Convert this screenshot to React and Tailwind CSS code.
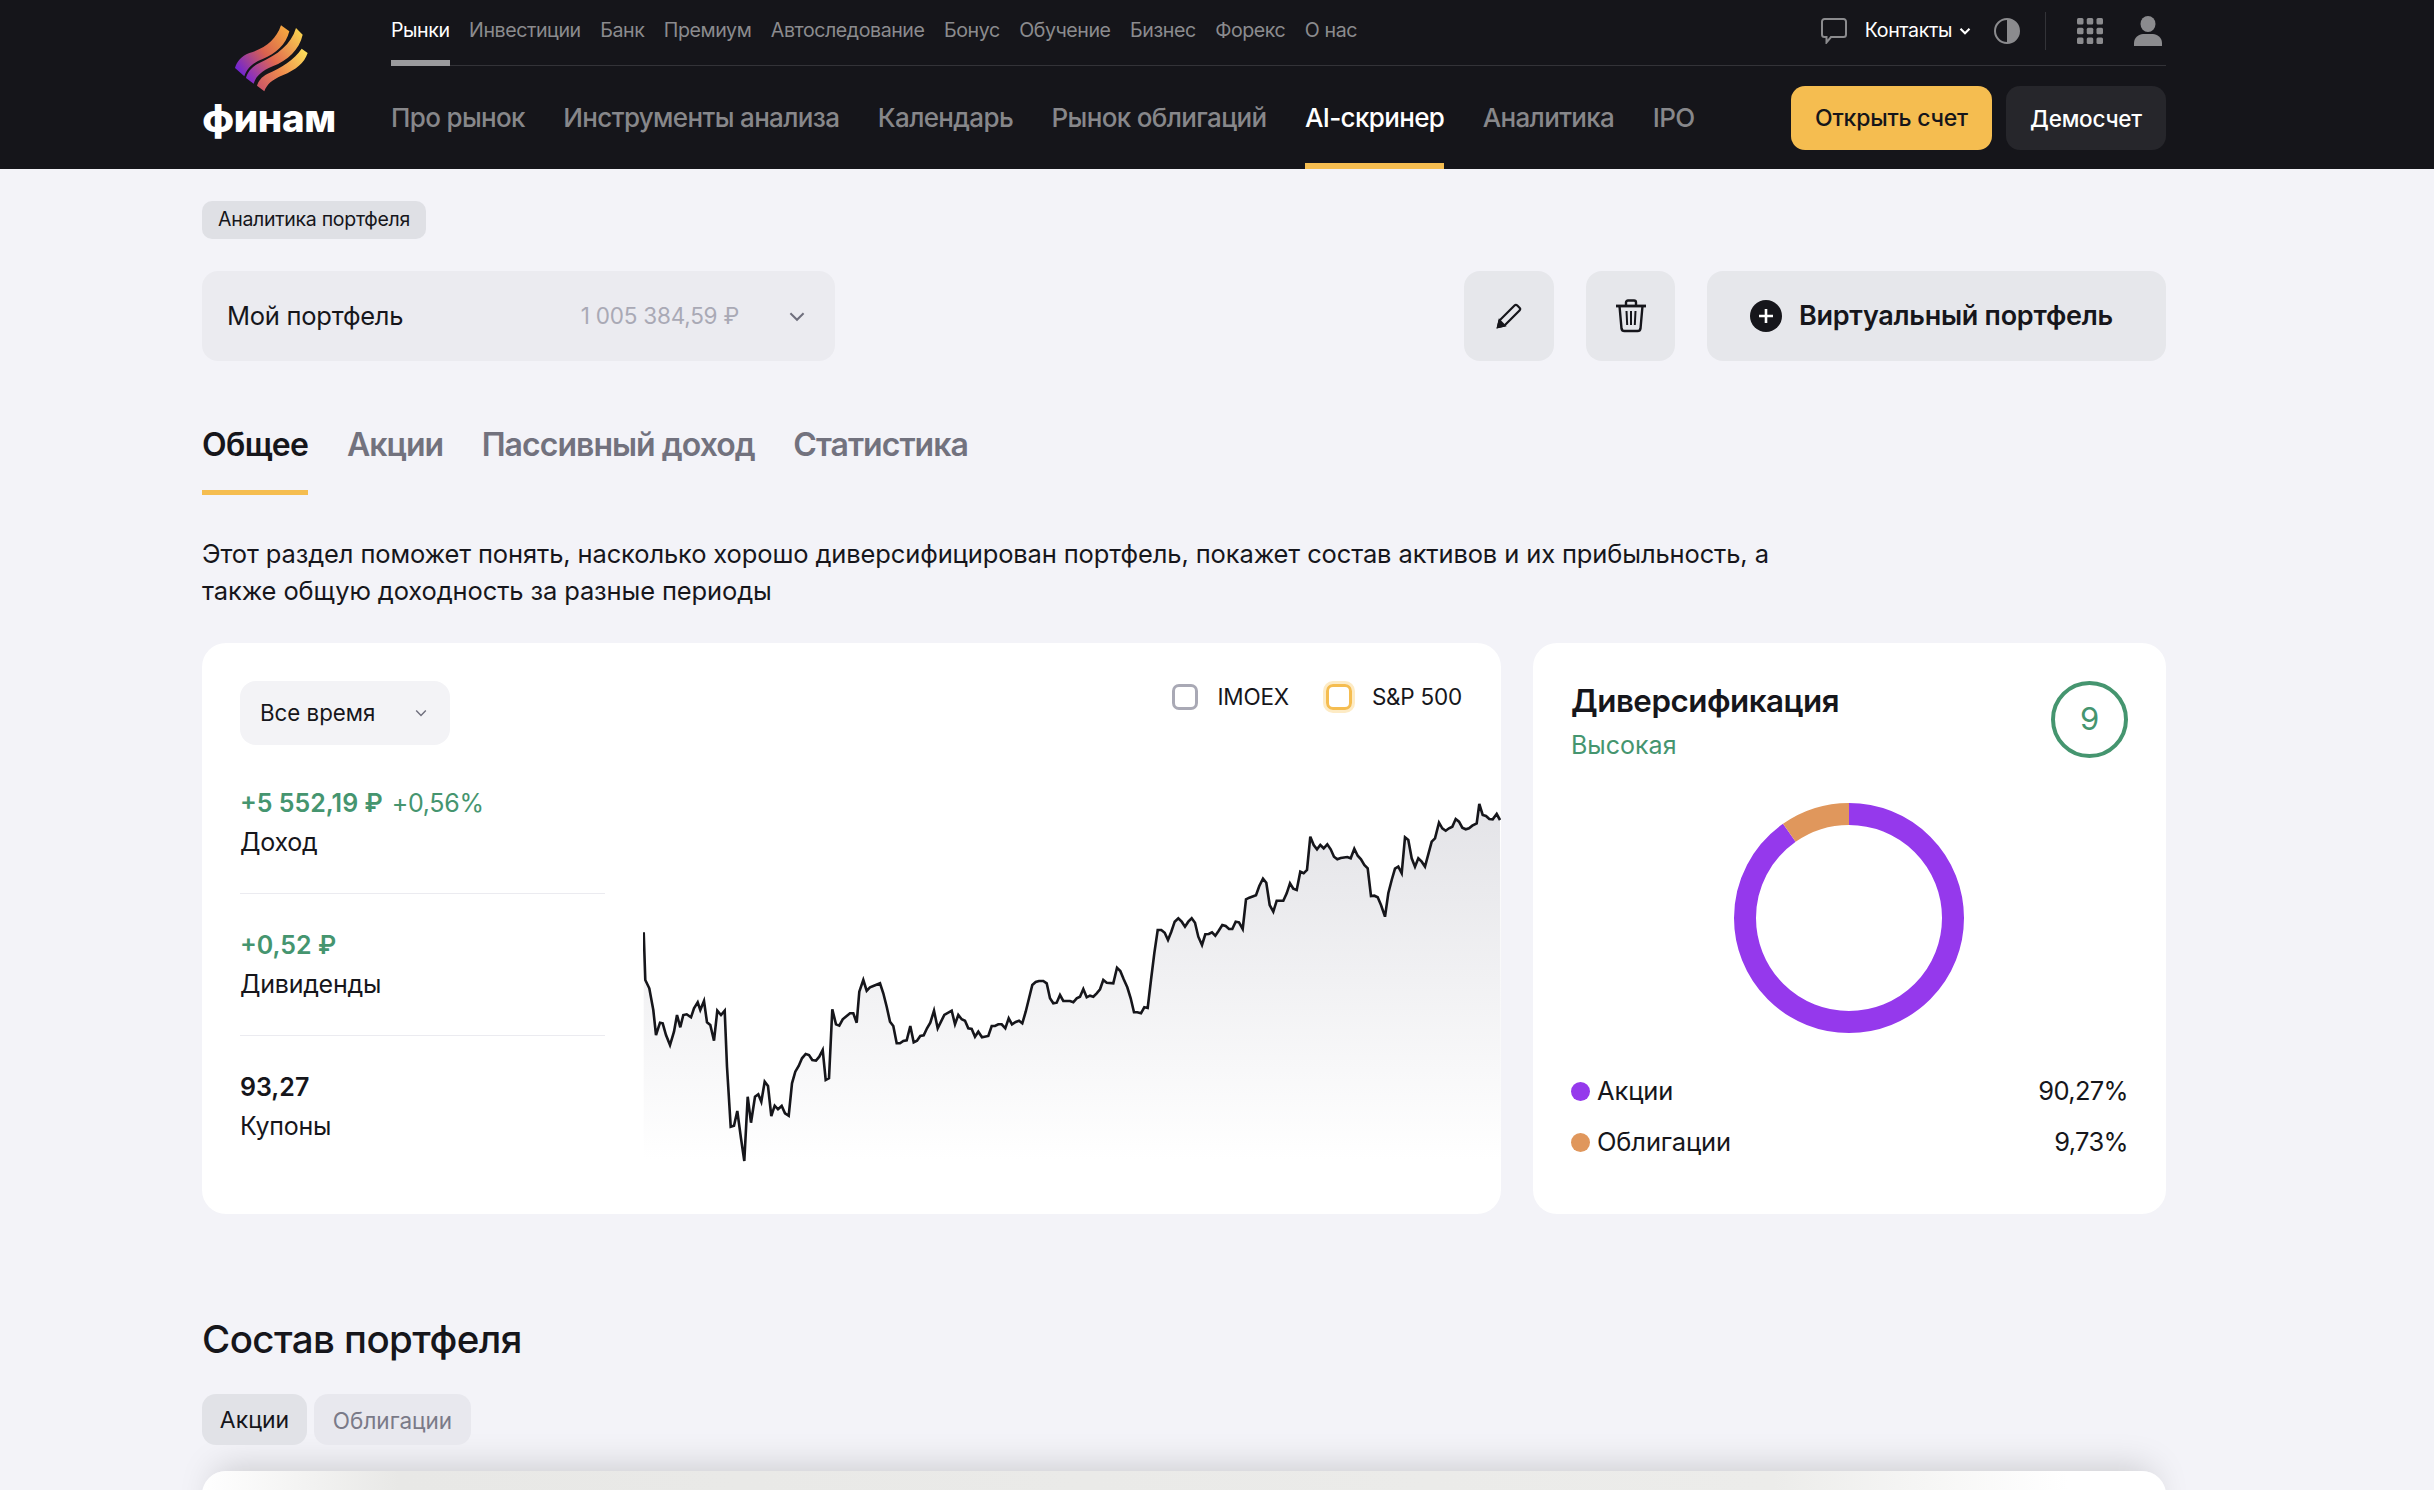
const topNav = ['Инвестиции', 'Банк', 'Премиум', 'Автоследование', 'Бонус', 'Обучение', 'Бизнес', 'Форекс', 'О нас']
const mainNav = ['Про рынок', 'Инструменты анализа', 'Календарь', 'Рынок облигаций', 'AI-скринер', 'Аналитика', 'IPO']

// chart trace, two halves in screen-ish units (3 per px)
const traceA = [[41,457],[46,600],[58,625],[70,690],[78,765],[90,728],[98,730],[108,765],[120,795],[132,755],[141,705],[151,742],[160,705],[170,703],[183,712],[192,685],[203,667],[211,690],[222,663],[231,727],[241,735],[252,782],[262,692],[273,705],[284,692],[291,860],[302,1040],[312,1037],[322,993],[333,1075],[343,1143],[353,950],[363,1028],[375,950],[385,943],[394,965],[404,905],[414,918],[424,1008],[434,977],[444,988],[455,978],[465,1000],[476,1007],[486,910],[496,875],[506,858],[516,835],[527,822],[537,825],[547,840],[558,842],[568,830],[578,810],[587,900],[597,895],[607,688],[618,733],[628,737],[638,718],[650,708],[660,700],[670,700],[680,728],[688,635],[700,600],[710,632],[720,622],[730,618],[750,610],[760,640],[770,680],[780,725],[790,738],[800,790],[810,790],[820,783],[830,781],[841,738],[851,787],[861,782],[871,768],[881,766],[891,745],[901,728],[912,692],[923,745],[933,725],[943,705],[965,692],[975,733],[985,705],[995,718],[1005,722],[1015,745],[1025,747],[1035,770],[1045,755],[1056,772],[1075,768],[1085,738],[1095,738],[1105,733],[1115,733],[1126,745],[1136,715],[1146,733],[1157,726],[1167,722],[1177,730],[1187,695],[1207,615],[1217,606],[1227,603],[1240,603],[1250,610],[1260,655],[1270,670],[1280,668],[1290,645],[1300,663],[1320,663],[1330,667],[1340,655],[1350,650],[1360,627],[1370,652],[1380,647],[1390,650],[1400,640]]
const traceB = [[0,628],[10,600],[20,608],[40,610],[51,563],[61,573],[71,598],[82,622],[92,655],[102,697],[112,697],[123,700],[133,682],[143,684],[153,600],[163,520],[173,450],[184,450],[194,458],[204,480],[214,455],[224,425],[235,415],[245,425],[255,440],[265,425],[275,415],[285,428],[295,470],[306,495],[316,463],[326,462],[336,457],[346,467],[356,452],[367,435],[377,438],[387,447],[397,447],[407,425],[417,427],[428,447],[438,358],[448,353],[468,346],[478,318],[489,296],[499,308],[509,375],[520,395],[530,362],[550,362],[560,340],[570,310],[580,326],[590,330],[601,275],[611,280],[621,270],[631,170],[641,195],[651,208],[661,195],[671,205],[682,193],[692,208],[702,230],[712,238],[722,234],[742,231],[752,235],[763,206],[773,227],[783,238],[793,255],[803,265],[813,348],[823,347],[833,352],[843,375],[855,410],[865,340],[875,300],[885,266],[895,260],[905,280],[915,172],[925,180],[935,235],[945,260],[955,235],[965,245],[975,260],[995,185],[1005,175],[1017,128],[1027,145],[1037,152],[1047,145],[1057,140],[1067,117],[1077,125],[1087,143],[1097,148],[1107,145],[1117,137],[1130,130],[1138,72],[1148,105],[1158,108],[1168,117],[1178,118],[1190,102],[1200,120]]

const points = [
    ...traceA.map(([x, y]) => [(x / 3 - 13).toFixed(1), (y / 3 - 20).toFixed(1)]),
    ...traceB.map(([x, y]) => [(x / 3 + 457).toFixed(1), (y / 3 - 20).toFixed(1)]),
]
const line = 'M' + points.map((p) => p.join(' ')).join('L')
const area = line + `L858 370L${points[0][0]} 370Z`

function Chevron({className, weight = 1.8}) {
    return (
        <svg viewBox="0 0 16 10" fill="none" stroke="currentColor" strokeWidth={weight} className={className}>
            <path d="M2 2l6 6 6-6" />
        </svg>
    )
}

function Logo() {
    return (
        <div className="flex flex-col items-center">
            <svg viewBox="150 40 240 210" className="mt-[23px] ml-[3px] h-[70px] w-[80px]">
                <defs>
                    <linearGradient id="b1" x1="165" y1="180" x2="320" y2="60" gradientUnits="userSpaceOnUse">
                        <stop offset="0" stopColor="#6d22d6" />
                        <stop offset="0.5" stopColor="#d9614f" />
                        <stop offset="1" stopColor="#f5a83f" />
                    </linearGradient>
                    <linearGradient id="b2" x1="195" y1="210" x2="365" y2="65" gradientUnits="userSpaceOnUse">
                        <stop offset="0" stopColor="#7a25d2" />
                        <stop offset="0.45" stopColor="#e2694f" />
                        <stop offset="1" stopColor="#f9d64f" />
                    </linearGradient>
                    <linearGradient id="b3" x1="230" y1="240" x2="380" y2="125" gradientUnits="userSpaceOnUse">
                        <stop offset="0" stopColor="#c8506a" />
                        <stop offset="0.45" stopColor="#ef8a4d" />
                        <stop offset="1" stopColor="#fbe15a" />
                    </linearGradient>
                </defs>
                <path fill="url(#b1)" d="M300 47C285 90 255 115 205 130C180 140 168 155 162 175L190 200C198 175 215 160 245 148C285 132 315 105 325 65Z" />
                <path fill="url(#b2)" d="M345 55C330 105 290 135 235 160C212 172 200 185 195 205L218 222C225 200 240 185 275 170C320 152 355 120 365 75Z" />
                <path fill="url(#b3)" d="M362 117C340 150 300 175 260 192C240 202 232 215 228 228L250 245C258 225 270 212 305 197C345 180 370 160 380 130Z" />
            </svg>
            <span className="mt-[3px] text-[38.500px] leading-[44px] font-extrabold tracking-[-0.01em] text-white">финам</span>
        </div>
    )
}

function Header() {
    return (
        <header className="flex h-[169px] bg-[#15151a] pr-[268px] pl-[202px]">
            <div className="w-[189px] pr-[55px]">
                <Logo />
            </div>
            <div className="flex flex-1 flex-col">
                <div className="flex h-[66px] items-stretch border-b border-[#333338]">
                    <nav className="flex flex-1 gap-[19.5px] text-[19.600px] tracking-[-0.022em] text-[#8b8b8e]">
                        <a className="relative flex items-center pb-[4px] text-white">
                            Рынки
                            <span className="absolute right-0 bottom-[-1px] left-0 h-[6px] bg-[#9a9a9d]" />
                        </a>
                        {topNav.map((item) => (
                            <a key={item} className="flex items-center pb-[4px]">{item}</a>
                        ))}
                    </nav>
                    <div className="flex items-center pb-[4px]">
                        <svg viewBox="0 0 26 26" fill="none" stroke="#8b8b8e" strokeWidth="2" className="h-[26px] w-[26px]">
                            <path d="M3.5 1h19A2.5 2.5 0 0 1 25 3.500v13a2.500 2.500 0 0 1-2.500 2.500H10l-4.500 5.500V19h-2A2.500 2.500 0 0 1 1 16.500v-13A2.500 2.500 0 0 1 3.500 1z" />
                        </svg>
                        <span className="ml-[18px] pt-[1px] text-[19.600px] tracking-[-0.02em] text-white">Контакты</span>
                        <Chevron weight={2.8} className="ml-[7px] h-[8px] w-[12px] text-white" />
                        <svg viewBox="0 0 26 26" className="ml-[23px] h-[26px] w-[26px]">
                            <circle cx="13" cy="13" r="12" fill="none" stroke="#8b8b8e" strokeWidth="2" />
                            <path d="M13 1a12 12 0 0 1 0 24z" fill="#8b8b8e" />
                        </svg>
                        <span className="ml-[25px] h-[38px] w-px bg-[#333338]" />
                        <svg viewBox="0 0 26 26" fill="#8b8b8e" className="ml-[31px] h-[26px] w-[26px]">
                            <rect x="0" y="0" width="6.500" height="6.500" rx="1.500" />
                            <rect x="9.750" y="0" width="6.500" height="6.500" rx="1.500" />
                            <rect x="19.500" y="0" width="6.500" height="6.500" rx="1.500" />
                            <rect x="0" y="9.750" width="6.500" height="6.500" rx="1.500" />
                            <rect x="9.750" y="9.750" width="6.500" height="6.500" rx="1.500" />
                            <rect x="19.500" y="9.750" width="6.500" height="6.500" rx="1.500" />
                            <rect x="0" y="19.500" width="6.500" height="6.500" rx="1.500" />
                            <rect x="9.750" y="19.500" width="6.500" height="6.500" rx="1.500" />
                            <rect x="19.500" y="19.500" width="6.500" height="6.500" rx="1.500" />
                        </svg>
                        <svg viewBox="0 0 28 30" fill="#8b8b8e" className="mr-[4px] ml-[31px] h-[30px] w-[28px]">
                            <ellipse cx="14" cy="8" rx="7.500" ry="8" />
                            <path d="M0 30v-3c0-5.500 5-9 9-9h10c4 0 9 3.500 9 9v3z" />
                        </svg>
                    </div>
                </div>
                <div className="flex flex-1 items-stretch">
                    <nav className="flex flex-1 gap-[38.500px] text-[26px] font-medium tracking-[-0.025em] text-[#87878a]">
                        {mainNav.map((item) => (
                            <a
                                key={item}
                                className={item === 'AI-скринер' ? 'relative flex items-center text-white' : 'flex items-center'}
                            >
                                {item}
                                {item === 'AI-скринер' && <span className="absolute right-0 bottom-0 left-0 h-[6px] bg-[#f5bd50]" />}
                            </a>
                        ))}
                    </nav>
                    <div className="flex items-center gap-[14px]">
                        <button className="h-[64px] w-[201px] rounded-[14px] bg-[#f5bd50] pt-[2px] text-[23px] font-medium tracking-[-0.01em] text-[#15151a]">Открыть счет</button>
                        <button className="h-[64px] w-[160px] rounded-[14px] bg-[#26262b] pt-[2px] text-[22.500px] font-medium tracking-[-0.01em] text-white">Демосчет</button>
                    </div>
                </div>
            </div>
        </header>
    )
}

function Toolbar() {
    return (
        <div className="mt-[32px] flex h-[90px] items-stretch">
            <div className="flex w-[633px] items-center rounded-[16px] bg-[#ebebf0] pr-[29px] pl-[25px]">
                <span className="flex-1 text-[25.500px] tracking-[-0.01em]">Мой портфель</span>
                <span className="text-[22.500px] tracking-[-0.01em] text-[#a9a9b5]">1 005 384,59 ₽</span>
                <Chevron className="ml-[49px] h-[11px] w-[18px] text-[#6f6f7d]" />
            </div>
            <div className="ml-auto flex gap-[32px]">
                <button className="flex w-[90px] items-center justify-center rounded-[16px] bg-[#e6e7eb]">
                    <svg viewBox="0 0 26 26" fill="none" stroke="#16161b" strokeWidth="2.200" className="h-[26px] w-[26px]">
                        <path d="M2 24l1.500-6.500L18.500 2.500a2 2 0 0 1 2.800 0l2.200 2.200a2 2 0 0 1 0 2.800L8.500 22.500z" />
                        <path d="M2 24l1.500-6.500 5 5z" fill="#16161b" />
                    </svg>
                </button>
                <button className="flex w-[89px] items-center justify-center rounded-[16px] bg-[#e6e7eb]">
                    <svg viewBox="0 0 32 34" fill="none" stroke="#16161b" strokeWidth="2.400" className="h-[34px] w-[32px]">
                        <path d="M1 7h30" strokeWidth="2.800" />
                        <path d="M11 7V3.500A2 2 0 0 1 13 1.500h6a2 2 0 0 1 2 2V7" />
                        <path d="M4.500 7l2 22.500a3 3 0 0 0 3 2.500h13a3 3 0 0 0 3-2.500L27.500 7" />
                        <path d="M11.500 12l.7 14M16 12v14M20.500 12l-.7 14" strokeWidth="2" />
                    </svg>
                </button>
                <button className="flex w-[459px] items-center rounded-[16px] bg-[#e6e7eb] pl-[43px]">
                    <svg viewBox="0 0 32 32" className="h-[32px] w-[32px]">
                        <circle cx="16" cy="16" r="16" fill="#16161b" />
                        <path d="M16 9v14M9 16h14" stroke="#fff" strokeWidth="2.600" />
                    </svg>
                    <span className="ml-[17px] text-[27px] font-semibold tracking-[-0.01em]">Виртуальный портфель</span>
                </button>
            </div>
        </div>
    )
}

function Tabs() {
    return (
        <div className="mt-[56px] flex gap-[38.500px] text-[32px] leading-[40px] font-semibold tracking-[-0.03em] text-[#72727e]">
            <a className="h-[78px] border-b-[5px] border-[#f5bd50] pt-[8px] tracking-[-0.018em] text-[#16161b]">Общее</a>
            <a className="h-[78px] pt-[8px]">Акции</a>
            <a className="h-[78px] pt-[8px]">Пассивный доход</a>
            <a className="h-[78px] pt-[8px]">Статистика</a>
        </div>
    )
}

function Stat({value, extra, label, green, last}) {
    return (
        <div className={last ? 'pb-[34px]' : 'border-b border-[#ebebf0] pb-[34px] mb-[34px]'}>
            <div className={green ? 'text-[25px] leading-[34px] text-[#45956f]' : 'text-[25px] leading-[34px]'}>
                <span className="font-semibold">{value}</span>
                {extra && <span className="ml-[9px] tracking-[-0.012em]">{extra}</span>}
            </div>
            <div className="mt-[5px] text-[25px] leading-[34px] tracking-[-0.01em]">{label}</div>
        </div>
    )
}

function Checkbox({label, active}) {
    return (
        <label className="flex items-center gap-[20px]">
            <span
                className={active
                    ? 'h-[26px] w-[26px] rounded-[7px] border-[3px] border-[#f5bd50] shadow-[0_0_0_3px_#fdebc5]'
                    : 'h-[26px] w-[26px] rounded-[7px] border-[3px] border-[#a9a9b5]'}
            />
            <span className="text-[22.500px] tracking-[-0.01em]">{label}</span>
        </label>
    )
}

function ChartCard() {
    return (
        <div className="flex w-[1299px] overflow-hidden rounded-[24px] bg-white">
            <div className="ml-[38px] w-[365px] pt-[38px]">
                <div className="mb-[41px] flex h-[64px] w-[210px] items-center rounded-[16px] bg-[#f3f3f6] pr-[22px] pl-[20px]">
                    <span className="flex-1 text-[22.300px]">Все время</span>
                    <Chevron className="h-[8px] w-[14px] text-[#6f6f7d]" />
                </div>
                <Stat green value="+5 552,19 ₽" extra="+0,56%" label="Доход" />
                <Stat green value="+0,52 ₽" label="Дивиденды" />
                <Stat value="93,27" label="Купоны" last />
            </div>
            <div className="ml-[38px] flex-1 pt-[38px]">
                <div className="flex h-[32px] items-center justify-end gap-[37px] pr-[39px]">
                    <Checkbox label="IMOEX" />
                    <Checkbox label="S&P 500" active />
                </div>
                <svg viewBox="0 0 858 370" className="mt-[87px] block h-[370px] w-[858px]">
                    <defs>
                        <linearGradient id="areaFill" x1="0" y1="0" x2="0" y2="360" gradientUnits="userSpaceOnUse">
                            <stop offset="0" stopColor="#e3e3e7" />
                            <stop offset="1" stopColor="#ffffff" />
                        </linearGradient>
                    </defs>
                    <path d={area} fill="url(#areaFill)" />
                    <path d={line} fill="none" stroke="#16161b" strokeWidth="2.600" strokeLinejoin="miter" />
                </svg>
            </div>
        </div>
    )
}

function DiversCard() {
    return (
        <div className="w-[633px] rounded-[24px] bg-white px-[38px] pt-[38px]">
            <div className="flex justify-between">
                <div>
                    <div className="text-[31.300px] leading-[40px] font-semibold tracking-[-0.015em]">Диверсификация</div>
                    <div className="mt-[7px] text-[25px] leading-[34px] text-[#45956f]">Высокая</div>
                </div>
                <div className="flex h-[77px] w-[77px] items-center justify-center rounded-full border-[4px] border-[#45956f] text-[31px] text-[#45956f]">9</div>
            </div>
            <svg viewBox="0 0 230 230" className="mt-[41px] ml-[163px] block h-[230px] w-[230px] -rotate-90">
                <circle cx="115" cy="115" r="104" fill="none" stroke="#9539ec" strokeWidth="22" pathLength="100" strokeDasharray="90.27 100" />
                <circle cx="115" cy="115" r="104" fill="none" stroke="#e0975c" strokeWidth="22" pathLength="100" strokeDasharray="9.73 100" strokeDashoffset="-90.27" />
            </svg>
            <div className="mt-[41px] flex items-center text-[25.500px] leading-[34px] tracking-[-0.005em]">
                <span className="h-[19px] w-[19px] rounded-full bg-[#9539ec]" />
                <span className="ml-[7px] flex-1">Акции</span>
                <span className="tracking-[-0.025em]">90,27%</span>
            </div>
            <div className="mt-[17px] flex items-center text-[25.500px] leading-[34px] tracking-[-0.005em]">
                <span className="h-[19px] w-[19px] rounded-full bg-[#e0975c]" />
                <span className="ml-[7px] flex-1">Облигации</span>
                <span className="tracking-[-0.025em]">9,73%</span>
            </div>
        </div>
    )
}

export default function App() {
    return (
        <div className="h-[1490px] overflow-hidden bg-[#f3f3f8] font-['Inter',sans-serif] text-[#16161b]">
            <Header />
            <main className="ml-[202px] w-[1964px]">
                <span className="mt-[32px] inline-flex h-[38px] items-center rounded-[10px] bg-[#dfe0e5] px-[16px] align-top text-[19.500px] tracking-[-0.015em]">Аналитика портфеля</span>
                <Toolbar />
                <Tabs />
                <p className="mt-[40px] text-[25.500px] leading-[37px] tracking-[-0.005em]">
                    Этот раздел поможет понять, насколько хорошо диверсифицирован портфель, покажет состав активов и их прибыльность, а<br />
                    также общую доходность за разные периоды
                </p>
                <div className="mt-[34px] flex h-[571px] gap-[32px]">
                    <ChartCard />
                    <DiversCard />
                </div>
                <h2 className="mt-[101px] text-[38.500px] leading-[48px] font-medium tracking-[-0.015em]">Состав портфеля</h2>
                <div className="mt-[30px] flex gap-[7px] pt-px">
                    <a className="flex h-[51px] w-[105px] items-center justify-center rounded-[14px] bg-[#e1e2e7] pt-[2px] text-[23px]">Акции</a>
                    <a className="flex h-[51px] w-[157px] items-center justify-center rounded-[14px] bg-[#e8e8ee] pt-[2px] text-[22.500px] text-[#7a7a88]">Облигации</a>
                </div>
                <div className="mt-[26px] h-[200px] rounded-[24px] bg-[linear-gradient(90deg,#fff_0%,#e8e8e6_10%,#ececea_80%,#fff_95%)] shadow-[0_-16px_36px_-14px_rgba(0,0,0,0.18)]" />
            </main>
        </div>
    )
}
